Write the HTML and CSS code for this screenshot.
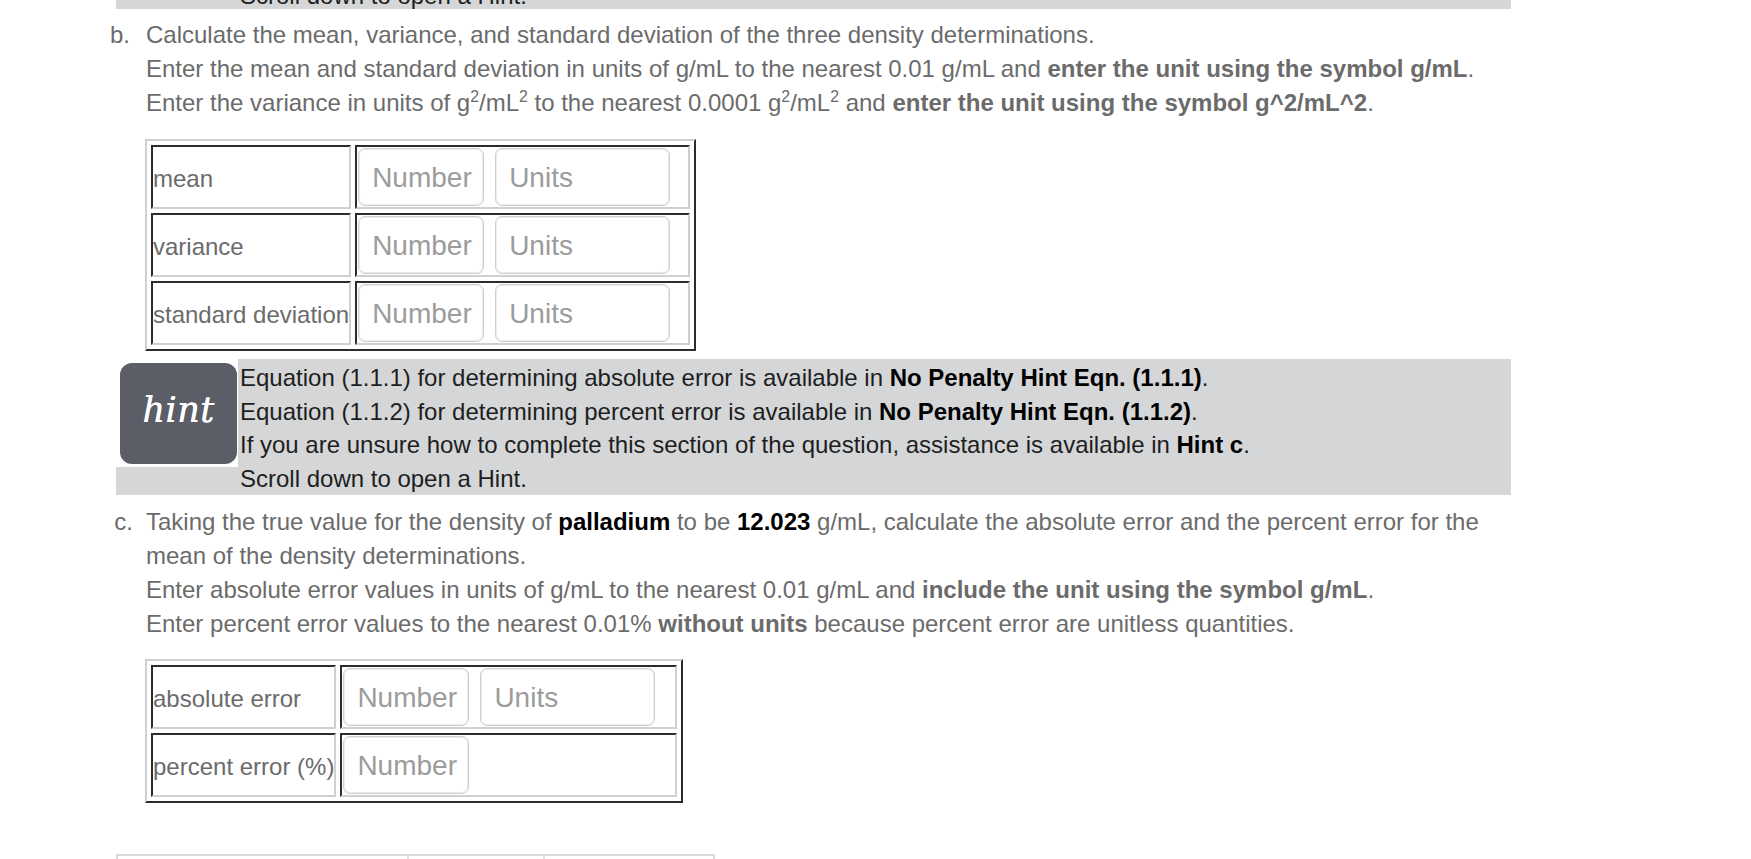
FILE: index.html
```html
<!DOCTYPE html>
<html lang="en">
<head>
<meta charset="utf-8">
<title>Density determinations</title>
<link rel="stylesheet" href="styles.css">
</head>
<body>
<div class="page">
  <div class="hint hint-prev">
    <div class="hint-col"></div>
    <div class="hint-text"><p class="cut">Scroll down to open a Hint.</p></div>
  </div>

  <div class="item item-b">
    <span class="marker">b.</span>
    <div class="body">
      <p>Calculate the mean, variance, and standard deviation of the three density determinations.</p>
      <p>Enter the mean and standard deviation in units of g/mL to the nearest 0.01 g/mL and <b>enter the unit using the symbol g/mL</b>.</p>
      <p>Enter the variance in units of g<sup>2</sup>/mL<sup>2</sup> to the nearest 0.0001 g<sup>2</sup>/mL<sup>2</sup> and <b>enter the unit using the symbol g^2/mL^2</b>.</p>
      <table class="answers answers-b">
        <tr>
          <td class="label">mean</td>
          <td class="fields"><div class="field-row"><input class="num" placeholder="Number"><input class="unit" placeholder="Units"></div></td>
        </tr>
        <tr>
          <td class="label">variance</td>
          <td class="fields"><div class="field-row"><input class="num" placeholder="Number"><input class="unit" placeholder="Units"></div></td>
        </tr>
        <tr>
          <td class="label">standard deviation</td>
          <td class="fields"><div class="field-row"><input class="num" placeholder="Number"><input class="unit" placeholder="Units"></div></td>
        </tr>
      </table>
    </div>
  </div>

  <div class="hint hint-main">
    <div class="hint-col">
      <div class="hint-img"><div class="hint-badge"><span>hint</span></div></div>
    </div>
    <div class="hint-text">
      <p>Equation (1.1.1) for determining absolute error is available in <b>No Penalty Hint Eqn. (1.1.1)</b>.</p>
      <p>Equation (1.1.2) for determining percent error is available in <b>No Penalty Hint Eqn. (1.1.2)</b>.</p>
      <p>If you are unsure how to complete this section of the question, assistance is available in <b>Hint c</b>.</p>
      <p>Scroll down to open a Hint.</p>
    </div>
  </div>

  <div class="item item-c">
    <span class="marker">c.</span>
    <div class="body">
      <p>Taking the true value for the density of <b class="dark">palladium</b> to be <b class="dark">12.023</b> g/mL, calculate the absolute error and the percent error for the mean of the density determinations.</p>
      <p>Enter absolute error values in units of g/mL to the nearest 0.01 g/mL and <b>include the unit using the symbol g/mL</b>.</p>
      <p>Enter percent error values to the nearest 0.01% <b>without units</b> because percent error are unitless quantities.</p>
      <table class="answers answers-c">
        <tr>
          <td class="label">absolute error</td>
          <td class="fields"><div class="field-row"><input class="num" placeholder="Number"><input class="unit" placeholder="Units"></div></td>
        </tr>
        <tr>
          <td class="label">percent error (%)</td>
          <td class="fields"><div class="field-row"><input class="num" placeholder="Number"></div></td>
        </tr>
      </table>
    </div>
  </div>

  <div class="next-table">
    <div class="nt-cell nt-1"></div>
    <div class="nt-cell nt-2"></div>
    <div class="nt-cell nt-3"></div>
  </div>
</div>
</body>
</html>
```

FILE: styles.css
```css
html, body {
  margin: 0;
  padding: 0;
  background: #ffffff;
}

body {
  font-family: "Liberation Sans", Arial, sans-serif;
  font-size: 24px;
  line-height: 34px;
  color: #6b6b6b;
}

.page {
  margin-left: 116px;
  width: 1395px;
}

p {
  margin: 0;
}

b {
  font-weight: bold;
}

b.dark {
  color: #000000;
}

sup {
  font-size: 0.66em;
  line-height: 0;
  vertical-align: 0.55em;
}

/* hint boxes */
.hint {
  display: flex;
  background: #d5d6d8;
  color: #1e1e1e;
}

.hint b {
  color: #000000;
}

.hint-col {
  width: 124px;
  flex: none;
}

.hint-img {
  width: 122px;
  height: 108px;
  background: #ffffff;
  padding: 4px 0 0 4px;
  box-sizing: border-box;
}

.hint-badge {
  width: 117px;
  height: 101px;
  border-radius: 12px;
  background: #5b5e67;
  display: flex;
  align-items: center;
  justify-content: center;
}

.hint-badge span {
  font-family: "DejaVu Serif", "Liberation Serif", serif;
  font-style: italic;
  font-size: 35px;
  line-height: 35px;
  color: #ffffff;
  letter-spacing: 0.5px;
  margin-top: -6px;
  text-shadow: 0.5px 0 0 #ffffff;
}

.hint-text {
  flex: 1;
  min-width: 0;
}

.hint-main {
  height: 136px;
}

.hint-main .hint-text {
  padding-top: 2px;
  line-height: 33.5px;
}

.hint-prev {
  height: 9px;
  overflow: hidden;
}

.hint-prev .cut {
  margin-top: -21px;
}

/* list items */
.item {
  display: flex;
}

.item-b {
  margin-top: 9px;
}

.item-c {
  margin-top: 10px;
}

.marker {
  width: 40px;
  margin-left: -10px;
  flex: none;
  padding-right: 15px;
  box-sizing: border-box;
  text-align: right;
  white-space: nowrap;
}

.item-b .marker {
  padding-right: 16px;
}

.item-c .marker {
  padding-right: 13px;
}

.body {
  flex: 1;
  min-width: 0;
}

/* answer tables */
.answers {
  border-collapse: separate;
  border-spacing: 4px;
  border-style: solid;
  border-width: 2px;
  border-color: #d0d0d0 #2c2c2c #2c2c2c #d0d0d0;
  margin-left: -1px;
  margin-top: 19px;
}

.answers-b {
  margin-bottom: 8px;
}

.answers-c {
  margin-top: 18px;
}

.answers td {
  border-style: solid;
  border-width: 2px;
  border-color: #2c2c2c #d0d0d0 #d0d0d0 #2c2c2c;
  padding: 1px 0;
  vertical-align: middle;
}

.answers .label {
  color: #6b6b6b;
  white-space: nowrap;
  padding-top: 4px;
}

.answers-b .label {
  width: 196px;
}

.answers-c .label {
  width: 179px;
}

.answers-b .fields {
  width: 331px;
}

.answers-c .fields {
  width: 333px;
}

.field-row {
  display: flex;
  gap: 11px;
  padding-left: 1px;
}

.field-row input {
  height: 58px;
  box-sizing: border-box;
  border: 1px solid #cfcfcf;
  border-radius: 7px;
  font-family: "Liberation Sans", Arial, sans-serif;
  font-size: 28px;
  padding: 2px 0 0 13px;
  margin: 0;
  color: #333333;
  background: #ffffff;
  outline: none;
  box-shadow: inset 0 0 0 1px #ececec;
}

.field-row input::placeholder {
  color: #9c9c9c;
  opacity: 1;
}

.field-row .num {
  width: 126px;
}

.field-row .unit {
  width: 175px;
}

/* partially visible table at bottom */
.next-table {
  display: flex;
  width: 599px;
  height: 30px;
  margin-top: 51px;
  border-top: 2px solid #d9d9d9;
  border-left: 2px solid #d9d9d9;
  border-right: 2px solid #d9d9d9;
  box-sizing: border-box;
}

.nt-cell {
  height: 100%;
}

.nt-1 {
  width: 289px;
  border-right: 2px solid #e2e2e2;
}

.nt-2 {
  width: 134px;
  border-right: 2px solid #e2e2e2;
}

.nt-3 {
  flex: 1;
}
```
